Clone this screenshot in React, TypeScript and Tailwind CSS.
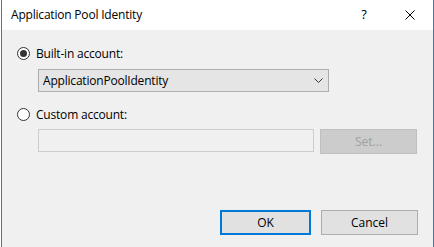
import React from 'react';

function Radio({ checked }: { checked?: boolean }) {
  return (
    <span className="flex h-[13px] w-[13px] items-center justify-center rounded-full border border-[#333333] bg-white">
      {checked && <span className="h-[7px] w-[7px] rounded-full bg-[#333333]" />}
    </span>
  );
}

export default function App() {
  return (
    <div
      className="h-[247px] w-[434px] bg-white pl-px text-[12px] text-black"
      style={{ fontFamily: '"Open Sans", "Noto Sans", sans-serif' }}
    >
      <div className="flex h-full flex-col border-x border-[#2b7cd3]">
        {/* Title bar */}
        <div className="flex h-[30px] shrink-0 items-center bg-white pl-[9px]">
          <span className="flex-1 tracking-[-0.2px]">Application Pool Identity</span>
          <span className="w-[46px] text-center text-[13px]">?</span>
          <span className="flex w-[46px] items-center justify-center">
            <svg width="10" height="10" viewBox="0 0 10 10">
              <path d="M0.5 0.5 L9.5 9.5 M9.5 0.5 L0.5 9.5" stroke="#000" strokeWidth="1" />
            </svg>
          </span>
        </div>

        {/* Body */}
        <div className="flex flex-1 flex-col bg-[#f0f0f0] pl-[15px] pr-[15px] pt-[16px]">
          <label className="flex h-[15px] items-center gap-[6px]">
            <Radio checked />
            <span className="tracking-[-0.2px]">Built-in account:</span>
          </label>

          <div className="ml-[21px] mt-[8px] flex h-[23px] w-[291px] items-center justify-between border border-[#adadad] bg-[#e5e5e5] pl-[4px] pr-[5px]">
            <span className="tracking-[-0.2px]">ApplicationPoolIdentity</span>
            <svg width="9" height="5" viewBox="0 0 9 5">
              <path d="M0.5 0.5 L4.5 4.5 L8.5 0.5" stroke="#333" strokeWidth="1" fill="none" />
            </svg>
          </div>

          <label className="mt-[15px] flex h-[15px] items-center gap-[6px]">
            <Radio />
            <span className="tracking-[-0.2px]">Custom account:</span>
          </label>

          <div className="ml-[21px] mt-[7px] flex items-start gap-[6px]">
            <div className="h-[23px] w-[276px] border border-[#cccccc] bg-[#f0f0f0]" />
            <button className="flex h-[25px] w-[97px] items-center justify-center border border-[#bfbfbf] bg-[#cccccc] text-[#a0a0a0]">
              Set...
            </button>
          </div>

          <div className="mt-auto mb-[12px] flex justify-end gap-[10px]">
            <button className="flex h-[25px] w-[91px] items-center justify-center border-2 border-[#0078d7] bg-[#e1e1e1]">
              OK
            </button>
            <button className="flex h-[25px] w-[97px] items-center justify-center border border-[#adadad] bg-[#e1e1e1]">
              Cancel
            </button>
          </div>
        </div>
      </div>
    </div>
  );
}
